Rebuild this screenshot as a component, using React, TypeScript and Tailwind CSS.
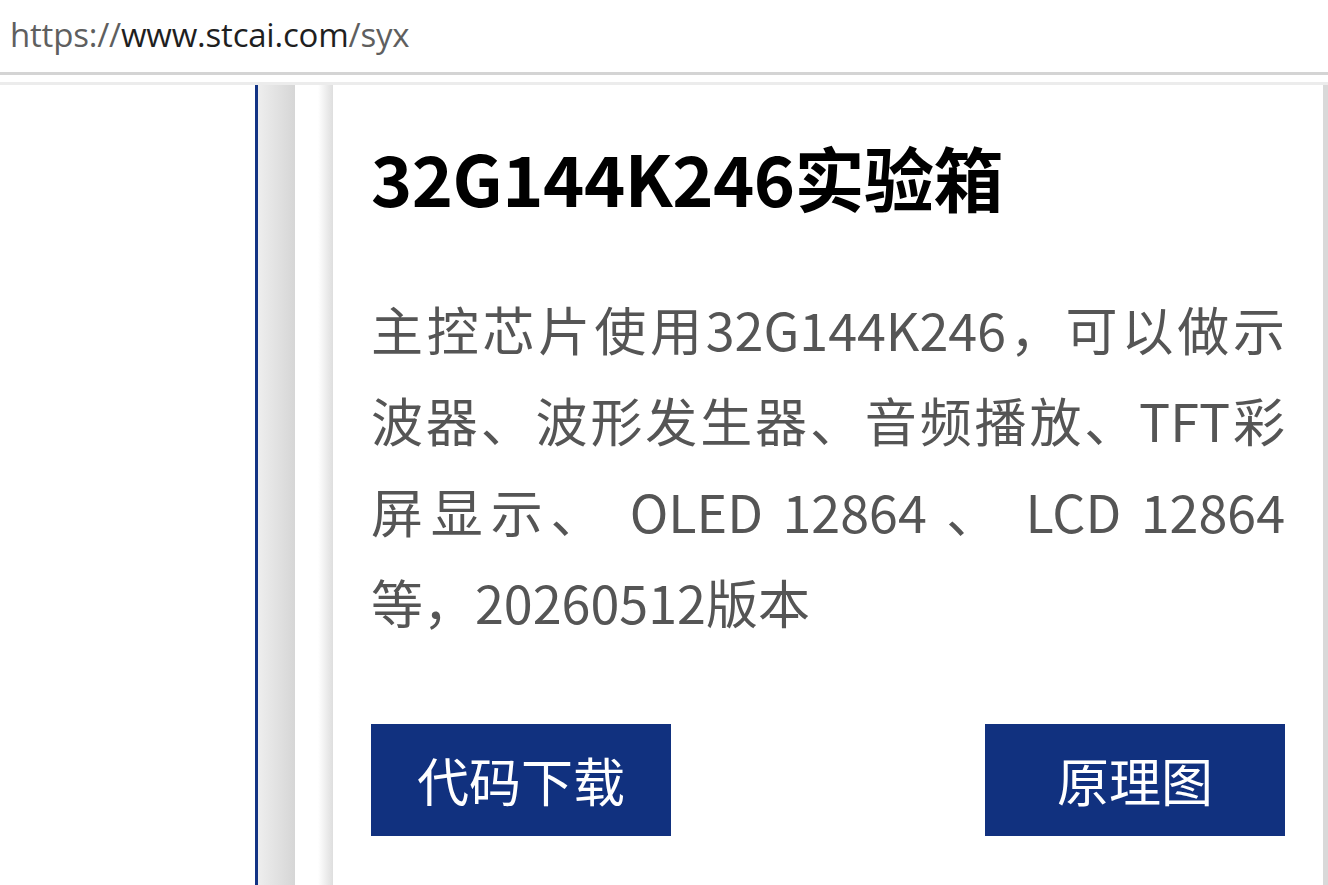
import type { ReactNode } from 'react';

const cjk = "font-['Noto_Sans_CJK_SC','Microsoft_YaHei',sans-serif]";

function BlueButton({ children }: { children: ReactNode }) {
  return (
    <button
      type="button"
      className={`flex h-[112px] w-[300px] items-center justify-center bg-[#11317f] text-[52px] leading-none text-white ${cjk}`}
    >
      {children}
    </button>
  );
}

export default function App() {
  return (
    <div className="flex h-[885px] w-[1328px] flex-col overflow-hidden bg-white">
      {/* address bar */}
      <div className="flex h-[72px] shrink-0 items-center pl-[10px] pb-[2px] font-['Open_Sans','Noto_Sans',sans-serif] text-[33px] tracking-[-0.2px]">
        <span className="text-[#5f5f5f]">https://</span>
        <span className="text-[#1f1f1f]">www.stcai.com</span>
        <span className="text-[#5f5f5f]">/syx</span>
      </div>
      <div className="h-[3px] shrink-0 bg-[#d4d4d4]" />
      <div className="h-[7px] shrink-0 bg-white" />
      <div className="h-[3px] shrink-0 bg-[#ececec]" />

      <div className="flex min-h-0 flex-1">
        <div className="w-[255px] shrink-0" />
        <div className="w-[3px] shrink-0 bg-[#123384]" />
        <div className="w-[37px] shrink-0 bg-gradient-to-r from-[#eeeeee] to-[#d6d6d6]" />
        <div className="w-[23px] shrink-0 bg-white" />
        <div className="w-[15px] shrink-0 bg-gradient-to-r from-white to-[#dedede]" />

        <div className="flex-1 px-[38px] pt-[42px]">
          <h1 className={`text-[70px] font-bold leading-[100px] tracking-[-0.5px] text-black ${cjk}`}>
            32G144K246实验箱
          </h1>
          <p className={`mt-[56px] text-justify text-[52px] leading-[91px] text-[#555555] ${cjk}`}>
            主控芯片使用32G144K246，可以做示波器、波形发生器、音频播放、TFT彩屏显示、 OLED 12864 、 LCD 12864 等，20260512版本
          </p>
          <div className="mt-[77px] flex justify-between">
            <BlueButton>代码下载</BlueButton>
            <BlueButton>原理图</BlueButton>
          </div>
        </div>

        <div className="w-[5px] shrink-0 bg-[#d9d9d9]" />
      </div>
    </div>
  );
}
